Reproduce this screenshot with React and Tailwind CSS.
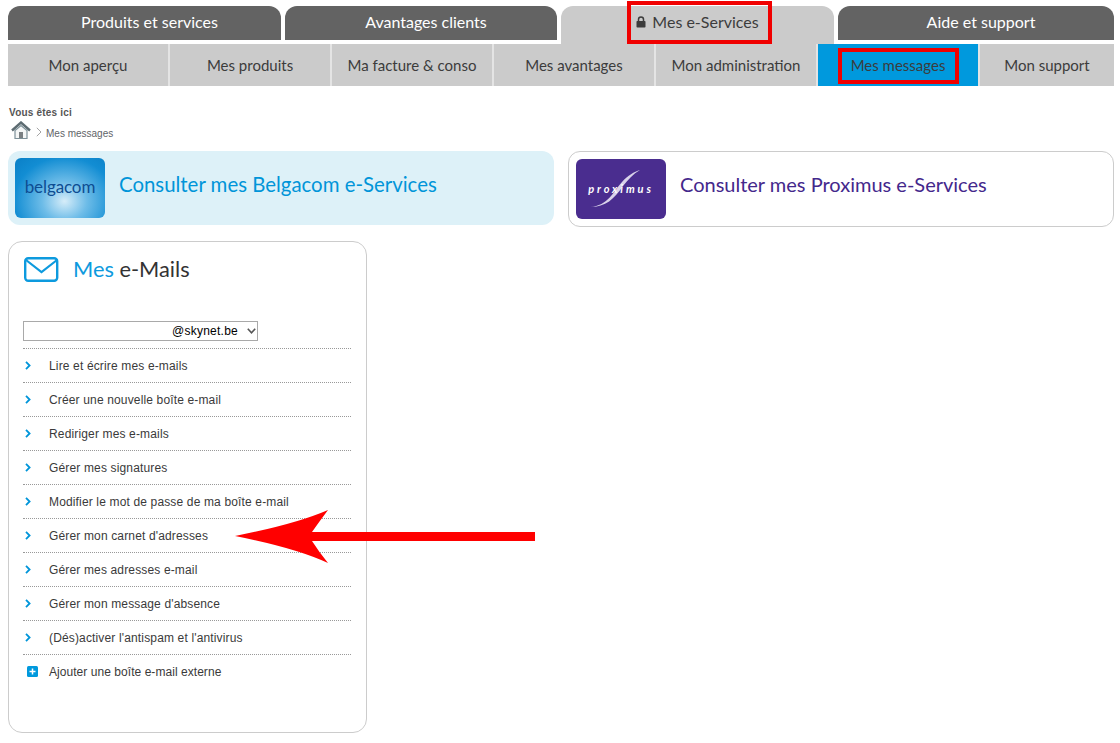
import React from "react";

const rounded = "font-['Lato','Noto_Sans',sans-serif]";

const subTabs = [
  "Mon aperçu",
  "Mes produits",
  "Ma facture & conso",
  "Mes avantages",
  "Mon administration",
  "Mes messages",
  "Mon support",
];
const links = [
  "Lire et écrire mes e-mails",
  "Créer une nouvelle boîte e-mail",
  "Rediriger mes e-mails",
  "Gérer mes signatures",
  "Modifier le mot de passe de ma boîte e-mail",
  "Gérer mon carnet d'adresses",
  "Gérer mes adresses e-mail",
  "Gérer mon message d'absence",
  "(Dés)activer l'antispam et l'antivirus",
];

function TopTab({ label, className }) {
  return (
    <div className={"flex h-[34px] items-center justify-center rounded-t-[12px] bg-[#636363] pb-[2px] pl-[10px] text-[16px] text-white " + className}>
      {label}
    </div>
  );
}

function Chevron() {
  return (
    <svg width="6" height="9" viewBox="0 0 6 9" className="shrink-0">
      <path d="M1 0.8 L4.6 4.5 L1 8.2" fill="none" stroke="#0095d9" strokeWidth="1.8" />
    </svg>
  );
}

export default function App() {
  return (
    <div className="relative w-[1120px] bg-white pb-[10px] pl-[8px] pr-[6px] pt-[6px] font-['Liberation_Sans',Arial,sans-serif]">
      <nav className={rounded}>
        <div className="flex h-[34px] items-start gap-[4px]">
          <TopTab label="Produits et services" className="w-[273px]" />
          <TopTab label="Avantages clients" className="w-[272px]" />
          <div className="relative flex h-[38px] w-[273px] items-start justify-center rounded-t-[12px] bg-[#cbcbcb] pt-[4px] text-[16px] text-[#3c3c3c]">
            <span className="flex items-center gap-[6px]">
              <svg width="10" height="12" viewBox="0 0 10 12">
                <path d="M2.5 5 V3.4 A2.5 2.5 0 0 1 7.5 3.4 V5" fill="none" stroke="#3c3c3c" strokeWidth="1.5" />
                <rect x="0.5" y="5" width="9" height="6.5" rx="0.8" fill="#3c3c3c" />
              </svg>
              Mes e-Services
            </span>
            <div className="absolute left-[66px] top-[-5px] h-[43px] w-[145px] border-[4px] border-[#f00000]" />
          </div>
          <TopTab label="Aide et support" className="w-[276px]" />
        </div>
        <div className="mt-[4px] flex h-[42px] bg-[#cbcbcb] text-[15px] text-[#3c3c3c]">
          {subTabs.map((t, i) => {
            const active = i === 5;
            return (
              <div
                key={t}
                className={
                  "relative flex items-center justify-center " +
                  (i < 6 ? "w-[162px] border-r-2 border-r-[#e4e4e4] " : "flex-1 ") +
                  (active ? "bg-[#0099dd]" : "")
                }
              >
                {t}
                {active && (
                  <div className="absolute left-[20px] top-[4px] h-[36px] w-[121px] border-[4px] border-[#f00000]" />
                )}
              </div>
            );
          })}
        </div>
      </nav>

      <div className="mt-[21px] pl-[1px] text-[10px] font-bold leading-[12px] tracking-[0.2px] text-[#555555]">
        Vous êtes ici
      </div>
      <div className="mt-[2px] flex h-[19px] items-center pl-[3px]">
        <svg width="20" height="19" viewBox="0 0 20 19">
          <path d="M1 9.5 L10 1.5 L19 9.5" fill="none" stroke="#5d6c72" strokeWidth="2.4" />
          <path d="M4 9.5 L10 4.5 L16 9.5 V17.5 H4 Z" fill="#f4f6f6" stroke="#7d9098" strokeWidth="1.2" />
          <rect x="8" y="11" width="4" height="6" fill="#7a7f82" />
        </svg>
        <svg width="6" height="10" viewBox="0 0 6 10" className="ml-[5px] mt-[2px]">
          <path d="M0.8 0.8 L5 5 L0.8 9.2" fill="none" stroke="#9a9a9a" strokeWidth="0.9" />
        </svg>
        <span className="ml-[4px] mt-[6px] text-[10px] text-[#5f6468]">Mes messages</span>
      </div>

      <div className={"mt-[11px] flex items-start gap-[14px] " + rounded}>
        <a className="flex h-[74px] w-[546px] items-center rounded-[12px] bg-[#ddf1f8] pl-[7px]">
          <div className="flex h-[60px] w-[90px] items-center justify-center rounded-[6px] bg-[radial-gradient(ellipse_at_55%_72%,#d6edf9_0%,#6dbce8_32%,#128dd3_72%,#0a7fc6_100%)] pb-[2px] text-[17px] tracking-[-0.1px] text-[#0d4d92]">
            belgacom
          </div>
          <span className="mb-[7px] ml-[14px] text-[20.4px] text-[#0095d9]">Consulter mes Belgacom e-Services</span>
        </a>
        <a className="flex h-[76px] w-[546px] items-center rounded-[12px] border border-[#cccccc] bg-white pl-[7px]">
          <div className="relative flex h-[60px] w-[90px] items-center justify-center rounded-[6px] bg-[#4a2d8f] text-[11px] font-bold italic tracking-[2.9px] text-white">
            <svg width="90" height="60" viewBox="0 0 90 60" className="absolute left-0 top-0">
              <path d="M14 48 C32 47 38 32 46 23 C52 16 58 13 64 11 C57 15 52 21 47 27 C38 40 30 48 14 48 Z" fill="#d9d2ea" />
            </svg>
            <span className="relative">proximus</span>
          </div>
          <span className="mb-[11px] ml-[14px] text-[20px] text-[#44288c]">Consulter mes Proximus e-Services</span>
        </a>
      </div>

      <section className="mt-[14px] h-[492px] w-[359px] rounded-[14px] border border-[#cccccc] px-[14px] pt-[14px]">
        <div className={"flex h-[26px] items-center pl-[1px] " + rounded}>
          <svg width="35" height="25" viewBox="0 0 35 25">
            <rect x="1.2" y="1.2" width="32" height="22.6" rx="3" fill="none" stroke="#0d9ade" strokeWidth="2.4" />
            <path d="M2 3 L17.5 15 L33 3" fill="none" stroke="#0d9ade" strokeWidth="2.2" />
          </svg>
          <h2 className="ml-[14px] text-[21.8px] leading-none text-[#333333]">
            <span className="text-[#0d9ade]">Mes</span> e-Mails
          </h2>
        </div>

        <div className="mt-[39px] flex h-[20px] w-[235px] items-center border border-[#a9a9a9] pl-[148px] text-[12px] tracking-[0.25px] text-black">
          @skynet.be
          <svg width="9" height="6" viewBox="0 0 9 6" className="ml-[9px]">
            <path d="M0.8 0.8 L4.5 4.8 L8.2 0.8" fill="none" stroke="#555555" strokeWidth="1.6" />
          </svg>
        </div>

        <ul className="mt-[7px] w-[328px] text-[12px] tracking-[0.15px] text-[#3a3a3a]">
          {links.map((l) => (
            <li key={l} className="flex h-[34px] items-center border-t border-dotted border-t-[#999999] pl-[2px]">
              <Chevron />
              <span className="ml-[18px]">{l}</span>
            </li>
          ))}
          <li className="flex h-[34px] items-center border-t border-dotted border-t-[#999999] pl-[4px]">
            <svg width="11" height="11" viewBox="0 0 11 11" className="shrink-0">
              <rect width="11" height="11" rx="1.5" fill="#0099dd" />
              <path d="M5.5 2.5 V8.5 M2.5 5.5 H8.5" stroke="#ffffff" strokeWidth="1.5" />
            </svg>
            <span className="ml-[11px] tracking-[0.05px]">Ajouter une boîte e-mail externe</span>
          </li>
        </ul>
      </section>

      <svg width="302" height="54" viewBox="0 0 302 54" className="absolute left-[234px] top-[510px]">
        <path
          d="M1 26 Q62 14 94 0 Q85 12 78 22 L301 22 L301 31 L78 31 Q85 42 94 53 Q62 38 1 26 Z"
          fill="#ff0000"
        />
      </svg>
    </div>
  );
}
